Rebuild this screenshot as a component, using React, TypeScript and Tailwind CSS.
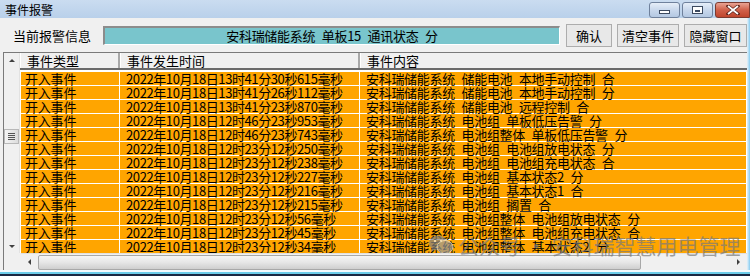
import React from "react";

const rows: [string, string][] = [
  ["2022年10月18日13时41分30秒615毫秒", "安科瑞储能系统 储能电池 本地手动控制 合"],
  ["2022年10月18日13时41分26秒112毫秒", "安科瑞储能系统 储能电池 本地手动控制 分"],
  ["2022年10月18日13时41分23秒870毫秒", "安科瑞储能系统 储能电池 远程控制 合"],
  ["2022年10月18日12时46分23秒953毫秒", "安科瑞储能系统 电池组 单板低压告警 分"],
  ["2022年10月18日12时46分23秒743毫秒", "安科瑞储能系统 电池组整体 单板低压告警 分"],
  ["2022年10月18日12时23分12秒250毫秒", "安科瑞储能系统 电池组 电池组放电状态 分"],
  ["2022年10月18日12时23分12秒238毫秒", "安科瑞储能系统 电池组 电池组充电状态 合"],
  ["2022年10月18日12时23分12秒227毫秒", "安科瑞储能系统 电池组 基本状态2 分"],
  ["2022年10月18日12时23分12秒216毫秒", "安科瑞储能系统 电池组 基本状态1 合"],
  ["2022年10月18日12时23分12秒215毫秒", "安科瑞储能系统 电池组 搁置 合"],
  ["2022年10月18日12时23分12秒56毫秒", "安科瑞储能系统 电池组整体 电池组放电状态 分"],
  ["2022年10月18日12时23分12秒45毫秒", "安科瑞储能系统 电池组整体 电池组充电状态 合"],
  ["2022年10月18日12时23分12秒34毫秒", "安科瑞储能系统 电池组整体 基本状态2 分"],
];

const font = "font-['Noto_Sans_CJK_SC','Noto_Sans_CJK_JP',sans-serif]";

function CtrlBtn({ kind }: { kind: "min" | "max" | "close" }) {
  if (kind === "close") {
    return (
      <div className="w-[35px] h-[16px] rounded-l-[3px] border border-[#7a3a30] bg-gradient-to-b from-[#e8a293] via-[#d0604a] to-[#c0452c] flex items-center justify-center">
        <svg width="14" height="10" viewBox="0 0 14 10">
          <path d="M2 1 L12 9 M12 1 L2 9" stroke="#5a2018" strokeWidth="3.2" strokeLinecap="square" />
          <path d="M2 1 L12 9 M12 1 L2 9" stroke="#ffffff" strokeWidth="1.8" />
        </svg>
      </div>
    );
  }
  return (
    <div className="w-[31px] h-[16px] rounded-[3px] border border-[#6f819c] bg-gradient-to-b from-[#e6eef8] via-[#c9d8ec] to-[#b4c8e2] flex items-center justify-center">
      {kind === "min" ? (
        <div className="w-[11px] h-[4px] mt-[3px] bg-white border border-[#3c4a60]" />
      ) : (
        <div className="w-[11px] h-[8px] bg-white border border-[#3c4a60] flex items-center justify-center">
          <div className="w-[5px] h-[2px] mt-[1px] bg-[#3c4a60]" />
        </div>
      )}
    </div>
  );
}

function Btn({ w, children }: { w: string; children: React.ReactNode }) {
  return (
    <div
      className={`${w} h-[23px] border border-[#adadad] bg-[#e8e8e8] flex items-center justify-center text-[13px] leading-[13px] text-black`}
    >
      {children}
    </div>
  );
}

export default function App() {
  return (
    <div className={`relative w-[750px] h-[276px] overflow-hidden flex flex-col bg-[#f0f0f0] ${font}`}>
      {/* title bar */}
      <div className="h-[22px] flex items-start bg-gradient-to-b from-[#cadcf0] to-[#b9d0ea]">
        <div className="pl-[5px] pt-[3px] text-[12px] leading-[14px] text-black flex-1">事件报警</div>
        <div className="flex gap-[2px] pt-[2px] pl-[2px]">
          <CtrlBtn kind="min" />
          <CtrlBtn kind="max" />
          <CtrlBtn kind="close" />
        </div>
      </div>

      {/* body */}
      <div className="flex-1 flex">
        <div className="flex-1 flex flex-col">
          {/* info row */}
          <div className="h-[34px] flex items-center">
            <div className="ml-[13px] w-[90px] text-[13px] leading-[13px] text-black">当前报警信息</div>
            <div className="w-[457px] h-[19px] border-t-2 border-l-2 border-t-[#8c8c8c] border-l-[#8c8c8c] border-b border-r border-b-white border-r-white bg-[#79c5cc] flex items-center justify-center text-[13px] leading-[13px] text-black tracking-[-0.3px] [word-spacing:4px]">
              安科瑞储能系统 单板15 通讯状态 分
            </div>
            <div className="ml-[6px] flex gap-[5px]">
              <Btn w="w-[46px]">确认</Btn>
              <Btn w="w-[62px]">清空事件</Btn>
              <Btn w="w-[63px]">隐藏窗口</Btn>
            </div>
          </div>

          {/* table */}
          <div className="flex-1 ml-[3px] border-t border-l border-[#7a7a7a] flex flex-col">
            <div className="flex flex-1 min-h-0">
              {/* vertical scrollbar */}
              <div className="w-[16px] flex flex-col items-center bg-[#f0f0f0] border-r border-[#e2e2e2]">
                <div className="h-[14px] w-full flex items-center justify-center">
                  <div className="w-0 h-0 border-l-[3px] border-r-[3px] border-b-[3px] border-l-transparent border-r-transparent border-b-[#404040]" />
                </div>
                <div className="h-[62px]" />
                <div className="w-[15px] h-[15px] border border-[#b8b8b8] bg-gradient-to-r from-[#f4f4f4] to-[#dcdcdc] flex flex-col items-center justify-center gap-[1px]">
                  <div className="w-[7px] h-px bg-[#555]" />
                  <div className="w-[7px] h-px bg-[#555]" />
                  <div className="w-[7px] h-px bg-[#555]" />
                  <div className="w-[7px] h-px bg-[#555]" />
                </div>
                <div className="flex-1" />
                <div className="h-[14px] w-full flex items-center justify-center">
                  <div className="w-0 h-0 border-l-[3px] border-r-[3px] border-t-[3px] border-l-transparent border-r-transparent border-t-[#404040]" />
                </div>
              </div>

              {/* list */}
              <div className="flex-1 flex flex-col min-w-0">
                <div className="h-[17px] flex border-b-2 border-[#6a6a6a] bg-[#f0f0f0] text-[13px] leading-[13px] text-black">
                  <div className="w-[100px] pl-[6px] flex items-center border-r-2 border-r-[#a8a8a8] border-l border-l-white">事件类型</div>
                  <div className="w-[240px] pl-[6px] flex items-center border-r-2 border-r-[#a8a8a8] border-l border-l-white">事件发生时间</div>
                  <div className="flex-1 pl-[6px] flex items-center border-l border-l-white">事件内容</div>
                </div>
                <div className="flex-1 overflow-hidden bg-white pt-[2px] flex flex-col gap-px">
                  {rows.map(([t, c], i) => (
                    <div key={i} className="h-[13px] shrink-0 flex gap-px pl-px pr-px text-[13px] leading-[13px] text-black bg-white">
                      <div className="w-[98px] bg-[#ffa500] pl-[4px] whitespace-nowrap tracking-[-0.2px]">开入事件</div>
                      <div className="w-[239px] bg-[#ffa500] pl-[6px] whitespace-nowrap tracking-[-0.4px]">{t}</div>
                      <div className="flex-1 bg-[#ffa500] pl-[6px] whitespace-nowrap tracking-[-0.3px] [word-spacing:4px]">{c}</div>
                    </div>
                  ))}
                </div>
              </div>
            </div>

            {/* horizontal scrollbar row */}
            <div className="h-[17px] flex">
              <div className="w-[17px] bg-[#f0f0f0]" />
              <div className="flex-1 flex items-center bg-[#f0f0f0] border-t border-[#e0e0e0]">
                <div className="w-[17px] h-full flex items-center justify-center">
                  <div className="w-0 h-0 border-t-[3px] border-b-[3px] border-r-[3px] border-t-transparent border-b-transparent border-r-[#404040]" />
                </div>
                <div className="w-[603px] h-[15px] border border-[#a8a8a8] rounded-[2px] bg-gradient-to-b from-[#f6f6f6] via-[#e6e6e6] to-[#cfcfcf]" />
                <div className="flex-1" />
                <div className="w-[17px] h-full flex items-center justify-center">
                  <div className="w-0 h-0 border-t-[3px] border-b-[3px] border-l-[3px] border-t-transparent border-b-transparent border-l-[#404040]" />
                </div>
              </div>
            </div>
          </div>
        </div>
        <div className="w-[4px] bg-gradient-to-r from-[#e6f2fa] to-[#86ccef]" />
      </div>

      {/* bottom edges */}
      <div className="h-[3px] bg-[#f4f8fb]" />
      <div className="h-[3px] bg-[#6ccbe8]" />
      <div className="h-[4px] bg-[#1b2742]" />

      {/* watermark overlay */}
      <div className="absolute left-[428px] top-[234px] flex items-center gap-[4px] opacity-70 pointer-events-none">
        <svg width="26" height="22" viewBox="0 0 26 22">
          <ellipse cx="10" cy="9" rx="9" ry="7.5" fill="#808080" />
          <path d="M4 14 L3 18 L8 15 Z" fill="#808080" />
          <ellipse cx="17" cy="13" rx="8" ry="6.5" fill="#9a9a9a" stroke="#f0f0f0" strokeWidth="1" />
          <circle cx="7" cy="7" r="1.2" fill="#eee" />
          <circle cx="13" cy="7" r="1.2" fill="#eee" />
        </svg>
        <div className="text-[21px] leading-[22px] text-[#7a7a7a] whitespace-nowrap">公众号 · 安科瑞智慧用电管理</div>
      </div>
    </div>
  );
}
